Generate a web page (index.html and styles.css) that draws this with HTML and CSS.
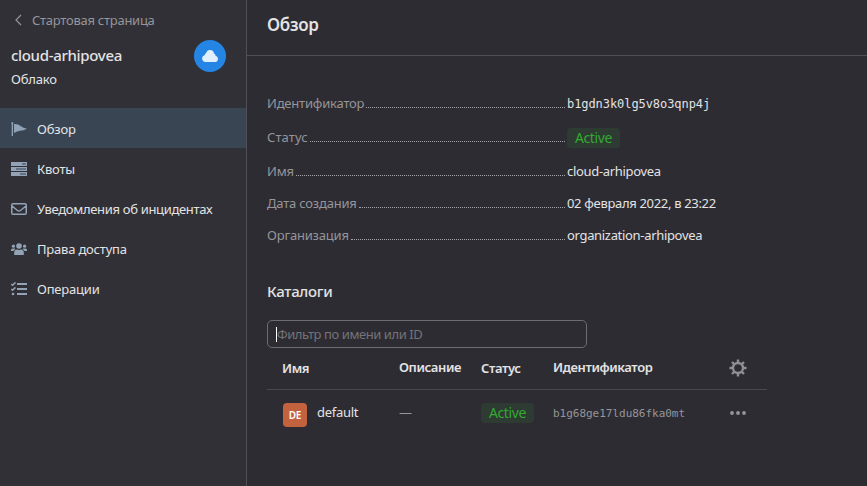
FILE: index.html
```html
<!DOCTYPE html>
<html lang="ru">
<head>
<meta charset="utf-8">
<title>Обзор</title>
<link rel="stylesheet" href="styles.css">
</head>
<body>
<div class="app">
  <aside class="sidebar">
    <a class="back"><svg width="7" height="12" viewBox="0 0 7 12"><path d="M6 1 1 6l5 5" fill="none" stroke="currentColor" stroke-width="1.2"/></svg><span>Стартовая страница</span></a>
    <div class="cloud">
      <div>
        <div class="cloud-name">cloud-arhipovea</div>
        <div class="cloud-type">Облако</div>
      </div>
      <div class="avatar"><svg width="16" height="12" viewBox="0 0 16 12"><path d="M3.5 12a3.5 3.5 0 0 1-.7-6.9A2.3 2.3 0 0 1 4.2 3 4 4 0 0 1 12 3.500a2.200 2.200 0 0 1 1.500 2.200A3.200 3.200 0 0 1 12.800 12Z" fill="#e1effd"/></svg></div>
    </div>
    <nav class="nav">
      <a class="item active"><svg width="16" height="14" viewBox="0 0 16 14"><path d="M1.200 0a1.200 1.200 0 0 1 .8 2v12H.7V2a1.200 1.200 0 0 1 .5-2ZM3 2q4-.3 7 2.200 2 1.800 6 2.600Q12.500 8.800 9 8.800 6 9 3 11Z"/></svg><span>Обзор</span></a>
      <a class="item"><svg width="16" height="14" viewBox="0 0 16 14"><path d="M0 0h16v4H0zM0 5h16v4H0zM0 10h16v4H0z"/><path class="cut" d="M11 1h4v2h-4zM5 6h10v2H5zM9 11h6v2H9z"/></svg><span>Квоты</span></a>
      <a class="item"><svg width="16" height="12" viewBox="0 0 16 12"><path class="line" d="M2 .75h12q1.250 0 1.250 1.250v8q0 1.250-1.250 1.250H2Q.75 11.250.75 10V2Q.75.75 2 .75ZM1 3l5.500 4.500q1.500 1 3 0L15 3"/></svg><span class="tight">Уведомления об инцидентах</span></a>
      <a class="item"><svg width="16" height="12" viewBox="0 0 16 12"><circle cx="8" cy="3" r="2.800"/><circle cx="2.400" cy="3.200" r="1.600"/><circle cx="13.600" cy="3.200" r="1.600"/><path d="M3.200 12V9.700Q3.200 6.600 6 6.600q2 .8 4 0 2.800 0 2.800 3.100V12ZM0 8V7q0-1.500 1.500-1.500h2Q4.300 5.500 4.500 6 2.800 6.800 2.600 8ZM16 8V7q0-1.500-1.500-1.500h-2q-.8 0-1 .5 1.700.8 1.900 2Z"/></svg><span>Права доступа</span></a>
      <a class="item"><svg width="16" height="14" viewBox="0 0 16 14"><path d="M6 1h10v2H6zM6 6h10v2H6zM6 11h10v2H6z"/><circle cx="2" cy="12" r="1.300"/><path class="line" d="m.3 2 1.200 1.200L4.500.4M.3 7l1.200 1.200 3-2.800"/></svg><span>Операции</span></a>
    </nav>
  </aside>
  <main class="main">
    <header class="header"><h1>Обзор</h1></header>
    <section class="content">
      <dl class="info">
        <div class="row"><dt>Идентификатор</dt><dd class="mono">b1gdn3k0lg5v8o3qnp4j</dd></div>
        <div class="row tall"><dt><span class="loose">Статус</span></dt><dd><span class="badge">Active</span></dd></div>
        <div class="row"><dt>Имя</dt><dd class="tight">cloud-arhipovea</dd></div>
        <div class="row"><dt>Дата создания</dt><dd class="tight">02 февраля 2022, в 23:22</dd></div>
        <div class="row"><dt>Организация</dt><dd class="tight">organization-arhipovea</dd></div>
      </dl>
      <h2>Каталоги</h2>
      <div class="filter"><i class="caret"></i><span>Фильтр по имени или ID</span></div>
      <div class="grid head">
        <div class="low">Имя</div><div>Описание</div><div class="low">Статус</div><div>Идентификатор</div>
        <svg class="gear" width="18" height="18" viewBox="-9 -9 18 18"><circle r="5" fill="none" stroke="currentColor" stroke-width="2.400"/><path d="M0-5.500v-3M0 5.500v3M-5.500 0h-3M5.500 0h3M-3.900-3.900l-2.100-2.100M3.900-3.900 6-6M-3.900 3.900-6 6M3.900 3.900 6 6" fill="none" stroke="currentColor" stroke-width="2.400"/></svg>
      </div>
      <div class="grid body">
        <div class="folder"><span class="tile">DE</span><span class="folder-name">default</span></div><div class="dash">—</div><div><span class="badge">Active</span></div><div class="mono small">b1g68ge17ldu86fka0mt</div>
        <svg class="dots" width="16" height="4" viewBox="0 0 16 4"><g fill="currentColor"><circle cx="2" cy="2" r="1.900"/><circle cx="8" cy="2" r="1.900"/><circle cx="14" cy="2" r="1.900"/></g></svg>
      </div>
    </section>
  </main>
</div>
</body>
</html>
```

FILE: styles.css
```css
* { box-sizing: border-box; margin: 0; padding: 0; }
body { background: #2d2c33; color: #e3e3e4; font: 13px/20px "Noto Sans", "Open Sans", sans-serif; overflow: hidden; letter-spacing: -.2px; white-space: nowrap; }
.app { display: flex; height: 486px; }
.sidebar { width: 247px; background: #313036; border-right: 1px solid #515056; }
.back { display: flex; align-items: center; gap: 10px; height: 20px; margin: 10px 0 0 15px; color: #969599; letter-spacing: -.26px; }
.cloud { display: flex; justify-content: space-between; padding: 10px 20px 0 11px; height: 78px; }
.cloud-name { font-size: 15px; font-weight: 500; line-height: 24px; margin-top: 3px; letter-spacing: -.32px; }
.cloud-type { line-height: 20px; margin-top: 2px; }
.avatar { width: 32px; height: 32px; border-radius: 50%; background: #2585e5; display: flex; align-items: center; justify-content: center; }
.item { display: flex; align-items: center; gap: 10px; height: 40px; padding: 1px 0 0 11px; }
.item svg { fill: #91a3b5; }
.item .cut { fill: #647384; }
.item .line { fill: none; stroke: #91a3b5; stroke-width: 1.5; }
.active { background: #3a4554; }
.tight { letter-spacing: -.32px; }
.loose { letter-spacing: .1px; }
.main { flex: 1; }
.header { height: 56px; border-bottom: 1px solid #504f55; padding: 13px 20px 0; }
h1 { font-size: 17px; line-height: 24px; font-weight: 600; letter-spacing: -.3px; }
.content { padding: 36px 20px 0; }
.row { display: flex; height: 32px; line-height: 22px; }
.row.tall, .row:first-child { height: 34px; }
dt { width: 298px; margin-right: 2px; display: flex; color: #969599; }
dt::after { content: ""; flex: 1; height: 15px; margin-left: 2px; border-bottom: 1px dotted #a5a4a8; }
.mono { font-family: "DejaVu Sans Mono", monospace; font-size: 12px; letter-spacing: -.07px; padding-top: 1px; font-weight: 500; }
.small { font-size: 11px; color: #969599; letter-spacing: -.02px; }
.badge { display: inline-block; height: 20px; line-height: 19px; padding: 0 8px; border-radius: 4px; background: #2e3b33; color: #34a931; font-size: 14px; letter-spacing: -.4px; vertical-align: top; margin-top: 2px; }
h2 { font-size: 15px; font-weight: 500; line-height: 24px; margin: 23px 0 17px; letter-spacing: -.3px; }
.filter { width: 320px; height: 28px; border: 1px solid #6d6c72; border-radius: 5px; padding: 3px 8px; display: flex; align-items: center; color: #747378; letter-spacing: -.42px; }
.caret { width: 1px; height: 15px; background: #fff; }
.grid { width: 500px; display: grid; grid-template-columns: 117px 82px 72px 177px 16px; padding-left: 15px; align-items: start; }
.head { height: 42px; border-bottom: 1px solid #49484e; font-weight: 600; padding-top: 9px; letter-spacing: -.4px; }
.head .low { margin-top: 1px; }
.gear { color: #8f8e93; margin-top: 2px; margin-left: -1px; }
.body { padding-top: 13px; }
.body .badge { margin-top: 0; }
.folder { display: flex; padding-left: 1px; }
.tile { width: 24px; height: 24px; border-radius: 4px; background: #c3623e; color: #fff; font-size: 10px; font-weight: 600; line-height: 25px; text-align: center; }
.folder-name { margin-left: 10px; letter-spacing: -.3px; }
.folder-name, .dash { margin-top: -1px; }
.dots { color: #969599; margin-top: 8px; }
.dash { color: #969599; }
```
